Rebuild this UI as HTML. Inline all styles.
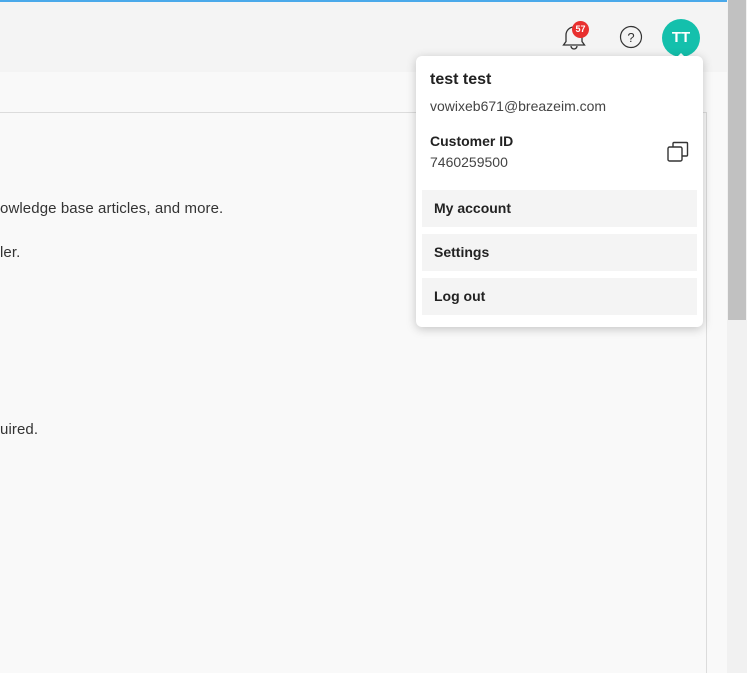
<!DOCTYPE html>
<html><head><style>
*{margin:0;padding:0;box-sizing:border-box}
body{width:747px;height:673px;overflow:hidden;background:#f9f9f9;font-family:"Liberation Sans",sans-serif;color:#222;position:relative}
.top{position:absolute;left:0;top:0;width:727px;height:2px;background:#4aa9ea}
.hdr{position:absolute;left:0;top:2px;width:727px;height:70px;background:#f4f4f4}
.hline{position:absolute;left:0;top:112px;width:706px;height:1px;background:#dcdcdc}
.vline{position:absolute;left:706px;top:112px;width:1px;height:561px;background:#dcdcdc}
.sb{position:absolute;left:727px;top:0;width:20px;height:673px;background:#f1f1f1}
.thumb{position:absolute;left:728px;top:0;width:18px;height:320px;background:#c1c1c1}
.t{position:absolute;left:0;font-size:15px;color:#333;letter-spacing:0.1px}
.dd{position:absolute;left:416px;top:56px;width:287px;height:271px;background:#fff;border-radius:6px;box-shadow:0 2px 10px rgba(0,0,0,.22)}
.it{position:absolute;left:6px;width:275px;height:37px;background:#f4f4f4;font-size:14px;font-weight:bold;color:#222;padding:10px 0 0 12px}
.av{position:absolute;left:662px;top:19px;width:38px;height:38px;border-radius:50%;background:#14c0ac;color:#fff;font-weight:bold;font-size:15px;text-align:center;line-height:38px}
.badge{position:absolute;left:572px;top:21px;width:17px;height:17px;border-radius:50%;background:#e8302f;color:#fff;font-size:9px;font-weight:bold;text-align:center;line-height:17px}
</style></head><body>
<div class="hdr"></div><div class="top"></div>
<div class="hline"></div><div class="vline"></div>
<div class="sb"></div><div class="thumb"></div>
<div class="t" style="top:200px">owledge base articles, and more.</div>
<div class="t" style="top:244px">ler.</div>
<div class="t" style="top:421px">uired.</div>
<svg style="position:absolute;left:561px;top:24px" width="26" height="26" viewBox="0 0 26 26" fill="none" stroke="#333" stroke-width="1.3"><path d="M2.5 21 L5 17.5 V11 a8 8 0 0 1 16 0 V17.5 L23.5 21 Z"/><path d="M10 22 a3 3 0 0 0 6 0"/></svg>
<div class="badge">57</div>
<svg style="position:absolute;left:619px;top:25px" width="24" height="24" viewBox="0 0 24 24" fill="none" stroke="#333" stroke-width="1.2"><circle cx="12" cy="12" r="10.5"/><text x="12" y="17" font-size="13" text-anchor="middle" fill="#333" stroke="none" font-family="Liberation Sans">?</text></svg>
<div class="av">TT</div>
<div style="position:absolute;left:676px;top:53px;width:0;height:0;border-left:5px solid transparent;border-right:5px solid transparent;border-bottom:5px solid #fff"></div>
<div class="dd">
<div style="position:absolute;left:14px;top:15px;font-size:16px;font-weight:bold">test test</div>
<div style="position:absolute;left:14px;top:42px;font-size:14px;color:#444">vowixeb671@breazeim.com</div>
<div style="position:absolute;left:14px;top:77px;font-size:14px;font-weight:bold">Customer ID</div>
<div style="position:absolute;left:14px;top:98px;font-size:14px;color:#444">7460259500</div>
<svg style="position:absolute;left:250px;top:84px" width="24" height="24" viewBox="0 0 24 24" fill="none" stroke="#333" stroke-width="1.4"><rect x="2" y="7" width="14" height="14" rx="1.5"/><path d="M7 7 V3.5 a1 1 0 0 1 1-1 H20.5 a1 1 0 0 1 1 1 V15 a1 1 0 0 1-1 1 H16"/></svg>
<div class="it" style="top:134px">My account</div>
<div class="it" style="top:178px">Settings</div>
<div class="it" style="top:222px">Log out</div>
</div>
</body></html>
